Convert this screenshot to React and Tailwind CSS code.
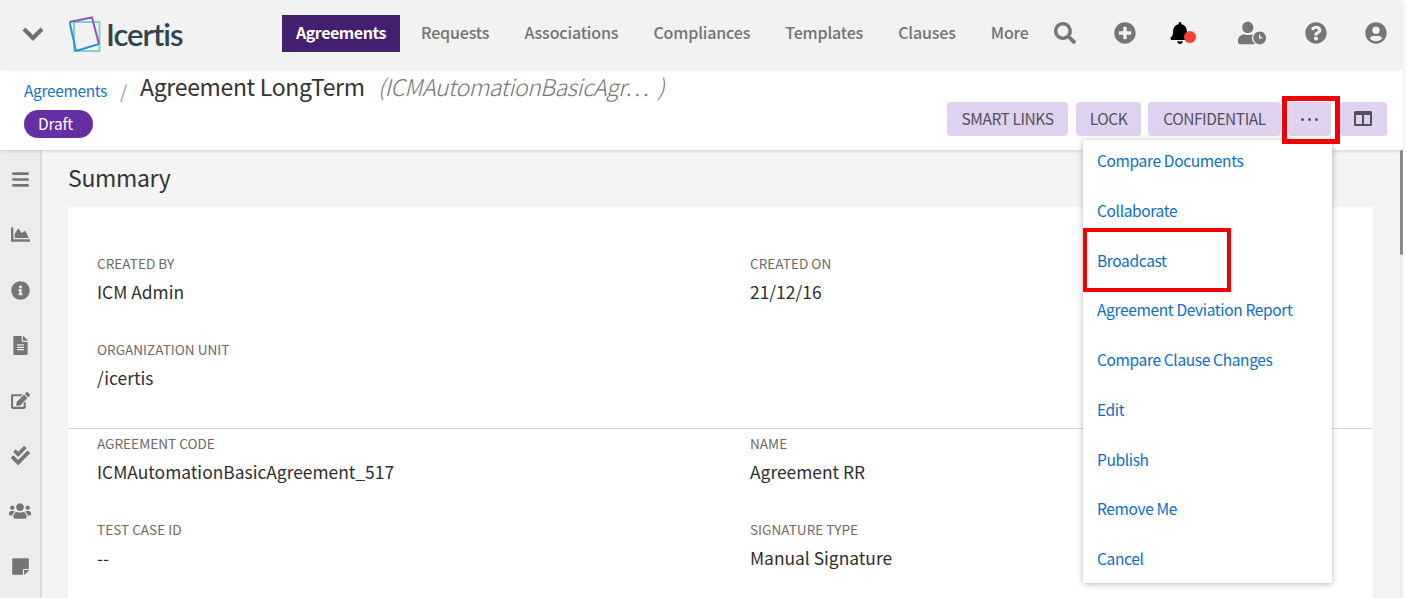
import { FaSearch, FaPlusCircle, FaBell, FaUserClock, FaQuestionCircle, FaUserCircle, FaBars, FaChartArea, FaInfoCircle, FaFileAlt, FaEdit, FaCheckDouble, FaUsers, FaStickyNote } from 'react-icons/fa'

const NAV = ['Requests', 'Associations', 'Compliances', 'Templates', 'Clauses', 'More']
const MENU = ['Compare Documents', 'Collaborate', 'Broadcast', 'Agreement Deviation Report', 'Compare Clause Changes', 'Edit', 'Publish', 'Remove Me', 'Cancel']
const SIDE = [
  { Icon: FaBars, size: 'text-[19px]' },
  { Icon: FaChartArea, size: 'text-[19px]' },
  { Icon: FaInfoCircle, size: 'text-[19px]' },
  { Icon: FaFileAlt, size: 'text-[19px]' },
  { Icon: FaEdit, size: 'text-[19px]' },
  { Icon: FaCheckDouble, size: 'text-[19px]' },
  { Icon: FaUsers, size: 'text-[22px] -my-[1.5px]' },
  { Icon: FaStickyNote, size: 'text-[19px]' },
]

function Logo() {
  return (
    <div className="flex items-end ml-[24px] w-[213px]">
      <svg width="38" height="36" viewBox="0 0 38 36" fill="none">
        <rect x="5" y="6" width="25.500" height="29" stroke="#6ed3c6" strokeWidth="1.800" />
        <path d="M0.500 6 L23 1.500 L30 28" stroke="#8a5bb5" strokeWidth="2" />
        <path d="M0.500 6 L7 35 L30 28" stroke="#2b8fd6" strokeWidth="2" />
      </svg>
      <span className="font-['Lato',sans-serif] text-[31px] leading-[36px] font-semibold tracking-[-1px] text-[#2f4450] -ml-[1px]">Icertis</span>
    </div>
  )
}

function Field({ label, value }) {
  return (
    <div>
      <div className="text-[13.600px] leading-[18px] text-[#6f6a66]">{label}</div>
      <div className="text-[17.400px] leading-[25px] mt-[7px] text-[#2e2e2e]">{value}</div>
    </div>
  )
}

function PurpleButton({ children, className }) {
  return <button className={`h-[34px] rounded bg-[#dfd2ef] text-[#54505a] text-[15.500px] tracking-[-0.45px] ${className}`}>{children}</button>
}

export default function App() {
  return (
    <div className="relative w-[1407px] h-[598px] overflow-hidden bg-white font-['Noto_Sans_CJK_SC',sans-serif]">
      <div className="w-[1403px] h-full flex flex-col">
        {/* top nav */}
        <header className="relative z-20 h-[68px] shrink-0 bg-[#f2f2f2] flex items-center shadow-[0_1px_4px_rgba(0,0,0,0.12)]">
          <svg width="24" height="16" viewBox="0 0 24 16" fill="none" className="ml-[21px]">
            <path d="M3 3 L12 12 L21 3" stroke="#707070" strokeWidth="4.200" />
          </svg>
          <Logo />
          <div className="h-[37px] w-[118px] flex items-center justify-center bg-[#43206f] text-white text-[16px] tracking-[-0.450px] font-semibold -mt-[2px] pb-[2px]">Agreements</div>
          <nav className="flex ml-[21px] gap-[35px] -mt-[4px]">
            {NAV.map(n => <span key={n} className="text-[16px] font-medium text-[#737373] tracking-[-0.150px]">{n}</span>)}
          </nav>
          <div className="flex-1" />
          <FaSearch className="text-[#757575] text-[22px] mr-[38px] -mt-[2px]" />
          <FaPlusCircle className="text-[#757575] text-[22px] mr-[33px] -mt-[2px]" />
          <div className="relative mr-[47px] -mt-[2px]">
            <FaBell className="text-black text-[22px]" />
            <span className="absolute left-[15px] top-[9px] w-3 h-3 rounded-full bg-[#f44336]" />
          </div>
          <FaUserClock className="text-[#757575] text-[28px] mr-[39px] -mt-[2px]" />
          <FaQuestionCircle className="text-[#757575] text-[22px] mr-[38px] -mt-[2px]" />
          <FaUserCircle className="text-[#757575] text-[22px] mr-[16px] -mt-[2px]" />
        </header>

        {/* title bar */}
        <div className="relative z-10 h-[82px] shrink-0 bg-white flex justify-between shadow-[0_1px_4px_rgba(0,0,0,0.15)]">
          <div className="pl-6">
            <div className="flex items-center h-[41px]">
              <span className="text-[#1a73c0] text-[15.500px] tracking-[-0.350px] mt-[5px]">Agreements</span>
              <span className="text-[#999] text-lg ml-[13px] mt-[5px]">/</span>
              <span className="text-[#333] text-[23px] tracking-[-0.330px] ml-[13px] -mt-[5px]">Agreement LongTerm</span>
              <span className="text-[#777] text-[23px] tracking-[-0.450px] italic font-light ml-[13px] -mt-[5px]">(ICMAutomationBasicAgr…&nbsp;&nbsp;)</span>
            </div>
            <div className="h-[28px] w-[69px] mt-[1px] pr-[6px] rounded-full bg-[#652fa3] text-white text-[15.500px] tracking-[-0.200px] flex items-center justify-center">Draft</div>
          </div>
          <div className="flex items-start gap-[7px] pt-[34px] pr-4">
            <PurpleButton className="w-[121px] mr-[1px]">SMART LINKS</PurpleButton>
            <PurpleButton className="w-[65px]">LOCK</PurpleButton>
            <PurpleButton className="w-[133px]">CONFIDENTIAL</PurpleButton>
            <PurpleButton className="w-[43px] flex items-center justify-center gap-[4px]">
              <span className="w-[3px] h-[3px] rounded-full bg-[#54505a]" />
              <span className="w-[3px] h-[3px] rounded-full bg-[#54505a]" />
              <span className="w-[3px] h-[3px] rounded-full bg-[#54505a]" />
            </PurpleButton>
            <PurpleButton className="w-[47px] ml-[2px] pr-[2px] flex items-center justify-center">
              <svg width="18" height="15" viewBox="0 0 18 15" className="-mt-[1px]">
                <path fillRule="evenodd" fill="#54505a" d="M1.500 0h15A1.500 1.500 0 0 1 18 1.500v12a1.500 1.500 0 0 1-1.500 1.500h-15A1.500 1.500 0 0 1 0 13.500v-12A1.500 1.500 0 0 1 1.500 0ZM2 4v9h6V4H2Zm8 0v9h6V4h-6Z" />
              </svg>
            </PurpleButton>
          </div>
        </div>

        <div className="flex flex-1 min-h-0">
          {/* side rail */}
          <aside className="w-[42px] shrink-0 bg-[#ececec] border-r-2 border-[#d9d9d9] flex flex-col items-center pt-[20px] gap-[36.300px]">
            {SIDE.map(({ Icon, size }, i) => <Icon key={i} className={`text-[#757575] ${size}`} />)}
          </aside>

          {/* content */}
          <main className="flex-1 bg-[#f4f4f4] pl-[26px] pr-[30px] relative">
            <h1 className="text-[23px] tracking-[-0.330px] leading-[55px] h-[57px] text-[#333]">Summary</h1>
            <section className="bg-white h-[400px]">
              <div className="grid grid-cols-[653px_1fr] px-[29px] pt-[47px] h-[222px] border-b border-[#d8d8d8] content-start gap-y-[36px]">
                <Field label="CREATED BY" value="ICM Admin" />
                <Field label="CREATED ON" value="21/12/16" />
                <Field label="ORGANIZATION UNIT" value="/icertis" />
              </div>
              <div className="grid grid-cols-[653px_1fr] px-[29px] pt-[5px] gap-y-[36px]">
                <Field label="AGREEMENT CODE" value="ICMAutomationBasicAgreement_517" />
                <Field label="NAME" value="Agreement RR" />
                <Field label="TEST CASE ID" value="--" />
                <Field label="SIGNATURE TYPE" value="Manual Signature" />
              </div>
            </section>
            <div className="absolute right-0 top-0 bottom-0 w-[3px] bg-[#ededed]">
              <div className="h-[105px] bg-[#8a8a8a] rounded-sm" />
            </div>
          </main>
        </div>
      </div>

      {/* actions dropdown */}
      <div className="absolute z-30 left-[1083px] top-[140px] w-[249px] h-[443px] bg-white shadow-[0_1px_6px_rgba(0,0,0,0.3)] pl-[14px] pt-[8px]">
        {MENU.map(m => <div key={m} className="h-[49.750px] leading-[24px] text-[#0b6fc2] text-[15.500px] tracking-[-0.350px]">{m}</div>)}
      </div>

      {/* red highlight boxes */}
      <div className="absolute z-40 left-[1282px] top-[96px] w-[58px] h-[48px] border-[5px] border-[#f00000]" />
      <div className="absolute z-40 left-[1083px] top-[228px] w-[148px] h-[64px] border-[4px] border-[#f00000]" />
    </div>
  )
}
